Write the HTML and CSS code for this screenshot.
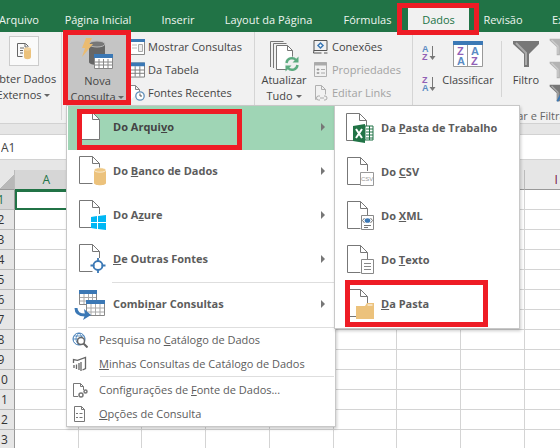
FILE: index.html
```html
<!DOCTYPE html>
<html lang="pt-BR">
<head>
<meta charset="utf-8">
<title>Nova Consulta</title>
<link rel="stylesheet" href="styles.css">
</head>
<body>
<svg class="defs" aria-hidden="true">
  <defs>
    <symbol id="page" viewBox="0 0 28 32"><path d="M1.500 1.500h13l7 7V15M14.500 1.500v7h7M1.500 1.500v27h13" fill="none" stroke="#777"/></symbol>
    <symbol id="table" viewBox="0 0 16 16"><path d="M.5.5h15v15H.5z" fill="#fff" stroke="#777"/><path d="M5.500 4v11M10.500 4v11M1 8h14M1 11.500h14" stroke="#777" fill="none"/><path d="M0 0h16v4H0z" fill="#3b78b5"/></symbol>
    <symbol id="funnel" viewBox="0 0 28 28"><path d="M1 1h26v3L17 14v13h-5V14L1 4z" fill="#777"/><path d="M4 3l10 10v12" fill="none" stroke="#aaa" stroke-width="2"/></symbol>
  </defs>
</svg>
<div class="app">
  <nav class="tabs">
    <a href="#">Arquivo</a><a href="#">Página Inicial</a><a href="#">Inserir</a><a href="#">Layout da Página</a><a href="#">Fórmulas</a><a href="#" class="active">Dados</a><a href="#">Revisão</a><a href="#">Exibição</a>
  </nav>
  <div class="ribbon">
    <div class="group external">
      <button class="big">
        <span class="frame"><svg width="18" height="18" viewBox="0 0 18 18"><path d="M2.500 1.500h8l3 3M2.500 1.500v13h5M10 2v3h3" fill="none" stroke="#666"/><path d="M5 6h4M5 8.500h3M5 11h3" stroke="#666"/><path d="M9 7v8c0 3 7 3 7 0V7" fill="#ecc27c"/><ellipse cx="12.500" cy="7" rx="3.500" ry="1.700" fill="#f1d29d"/></svg></span>
        <span>Obter Dados<br>Externos <i class="arrow"></i></span>
      </button>
    </div>
    <div class="group query">
      <button class="big pressed">
        <svg width="34" height="34" viewBox="0 0 34 34"><path d="M8 7v18c0 4 16 4 16 0V7z" fill="#666"/><ellipse cx="16" cy="7" rx="8" ry="3" fill="#777" stroke="#bbb"/><path d="M5 1h6L8 7h4L1 20l3-9H1z" fill="#eabb70"/><path d="M13.500 17.500h18v14h-18z" fill="#fff" stroke="#888"/><path d="M18 22v9M22.500 22v9M27 22v9M14 25h17M14 28h17" stroke="#888"/><path d="M13 17h19v4H13z" fill="#3b78b5"/></svg>
        <span>Nova<br>Consulta <i class="arrow"></i></span>
      </button>
    </div>
    <div class="group list">
      <button><svg width="15" height="16" viewBox="0 0 15 16"><path d="M.5.5h14v15H.5z" fill="#fff" stroke="#888"/><path d="M0 0h15v3H0z" fill="#3b78b5"/><path d="M8.500 5.500h4v7h-4z" fill="#eee" stroke="#aaa"/><path d="M2 6h5M2 9h5" stroke="#bbb"/></svg>Mostrar Consultas</button>
      <button><svg width="15" height="16"><use href="#table"/></svg>Da Tabela</button>
      <button><svg width="15" height="16" viewBox="0 0 15 16"><path d="M.5 14.500V.5h5l4 4V7M5.500.5v4h4" fill="#fff" stroke="#888"/><circle cx="10" cy="11" r="4.200" fill="#fff" stroke="#5f8fbb" stroke-width="1.300"/><path d="M10 8.500V11h2" fill="none" stroke="#555"/></svg>Fontes Recentes</button>
    </div>
    <div class="group refresh">
      <button class="big">
        <svg width="32" height="32" viewBox="0 0 32 32"><path d="M2.500 27V1.500h13M5.500 28V3.500h13" fill="none" stroke="#777"/><path d="M8.500 5.500h11l5 5v19h-16z" fill="#fff" stroke="#777"/><path d="M19.500 5.500v5h5" fill="none" stroke="#777"/><circle cx="24" cy="24" r="7.500" fill="#f1f1f1"/><path d="M18.500 23a5.500 5.500 0 0 1 9.500-3M29.500 25a5.500 5.500 0 0 1-9.500 3" fill="none" stroke="#5cab80" stroke-width="2.400"/><path d="M30.500 16.500v6h-6zM17.500 31.500v-6h6z" fill="#5cab80"/></svg>
        <span>Atualizar<br>Tudo <i class="arrow"></i></span>
      </button>
    </div>
    <div class="group list links">
      <button><svg width="15" height="15" viewBox="0 0 15 15"><path d="M1 .5h13v10H1zM1 10l-.5 3h8M11 13h3.500" fill="none" stroke="#555"/><path d="M7.500 3l2.500 2.500L7.500 8 5 5.500z" fill="#fff" stroke="#3b78b5" stroke-width="1.500"/></svg>Conexões</button>
      <button disabled><svg width="15" height="16" viewBox="0 0 15 16"><path d="M1.500.5h12v14h-12z" fill="none" stroke="#b0b0b0"/><path d="M1 2h13" stroke="#aaa" stroke-width="3"/><path d="M4 7h2v1H4zM4 10.500h2v1H4zM8 7.500h4M8 11h4" stroke="#aaa"/></svg>Propriedades</button>
      <button disabled><svg width="15" height="16" viewBox="0 0 15 16"><path d="M3.500 14.500h-1V.5h6l4 4v5M8.500.5v4h4" fill="none" stroke="#b0b0b0"/><path d="M7 11H5.500a2 2 0 0 0 0 4H7M11 11h1a2 2 0 0 1 0 4h-1M7 13h4" fill="none" stroke="#aaa"/></svg>Editar Links</button>
    </div>
    <div class="group sort">
      <div class="az">
        <button aria-label="Classificar de A a Z"><svg width="16" height="18" viewBox="0 0 16 18"><text x="1" y="8" class="letter blue">A</text><text x="1" y="16" class="letter purple">Z</text><path d="M11.500 2v12" stroke="#777"/><path d="M8.500 12h6l-3 4z" fill="#777"/></svg></button>
        <button aria-label="Classificar de Z a A"><svg width="16" height="18" viewBox="0 0 16 18"><text x="1" y="8" class="letter purple">Z</text><text x="1" y="16" class="letter blue">A</text><path d="M11.500 2v12" stroke="#777"/><path d="M8.500 12h6l-3 4z" fill="#777"/></svg></button>
      </div>
      <button class="big sorter">
        <svg width="30" height="26" viewBox="0 0 30 26"><path d="M.5.5h29v25H.5z" fill="#fff" stroke="#999"/><path d="M14.500 3v23" stroke="#999"/><path d="M0 0h30v4H0z" fill="#3b78b5"/><text x="4" y="14" class="letter l purple">Z</text><text x="4" y="24" class="letter l blue">A</text><text x="18" y="14" class="letter l blue">A</text><text x="18" y="24" class="letter l purple">Z</text></svg>
        <span>Classificar</span>
      </button>
      <span class="rule"></span>
      <button class="big filter"><svg width="28" height="28"><use href="#funnel"/></svg><span>Filtro</span></button>
      <div class="minis">
        <svg width="18" height="18" viewBox="0 0 28 28" opacity=".5"><use href="#funnel" width="28" height="28"/></svg>
        <svg width="18" height="18" viewBox="0 0 28 28" opacity=".5"><use href="#funnel" width="28" height="28"/></svg>
        <svg width="18" height="18" viewBox="0 0 28 28"><use href="#funnel" width="28" height="28"/><path d="M13 27l8-15 6 15" fill="none" stroke="#3b78b5" stroke-width="3"/></svg>
      </div>
      <span class="caption">Classificar e Filtrar</span>
    </div>
  </div>
  <div class="namebar"><input aria-label="Caixa de nome" value="A1"></div>
  <div class="sheet">
    <table>
      <thead><tr><th class="corner"></th><th>A</th><th>B</th><th>C</th><th>D</th><th>E</th><th>F</th><th>G</th><th>H</th><th class="last">I</th></tr></thead>
      <tbody>
        <tr><th class="cur">1</th><td class="selected"></td><td></td><td></td><td></td><td></td><td></td><td></td><td></td><td></td></tr>
        <tr><th>2</th><td></td><td></td><td></td><td></td><td></td><td></td><td></td><td></td><td></td></tr>
        <tr><th>3</th><td></td><td></td><td></td><td></td><td></td><td></td><td></td><td></td><td></td></tr>
        <tr><th>4</th><td></td><td></td><td></td><td></td><td></td><td></td><td></td><td></td><td></td></tr>
        <tr><th>5</th><td></td><td></td><td></td><td></td><td></td><td></td><td></td><td></td><td></td></tr>
        <tr><th>6</th><td></td><td></td><td></td><td></td><td></td><td></td><td></td><td></td><td></td></tr>
        <tr><th>7</th><td></td><td></td><td></td><td></td><td></td><td></td><td></td><td></td><td></td></tr>
        <tr><th>8</th><td></td><td></td><td></td><td></td><td></td><td></td><td></td><td></td><td></td></tr>
        <tr><th>9</th><td></td><td></td><td></td><td></td><td></td><td></td><td></td><td></td><td></td></tr>
        <tr><th>10</th><td></td><td></td><td></td><td></td><td></td><td></td><td></td><td></td><td></td></tr>
        <tr><th>11</th><td></td><td></td><td></td><td></td><td></td><td></td><td></td><td></td><td></td></tr>
        <tr><th>12</th><td></td><td></td><td></td><td></td><td></td><td></td><td></td><td></td><td></td></tr>
        <tr><th>13</th><td></td><td></td><td></td><td></td><td></td><td></td><td></td><td></td><td></td></tr>
      </tbody>
    </table>
  </div>

  <div class="menu main-menu">
    <button class="item open"><svg width="28" height="32" viewBox="0 0 28 32"><path d="M1.500 1.500h13l7 7v20h-20z" fill="#fff" stroke="#777"/><path d="M14.500 1.500v7h7" fill="none" stroke="#777"/></svg><span>Do Arqui<u>v</u>o</span></button>
    <button class="item"><svg width="28" height="32" viewBox="0 0 28 32"><use href="#page"/><path d="M16 15v13c0 3 12 3 12 0V15" fill="#ecc27c"/><ellipse cx="22" cy="15" rx="6" ry="2.200" fill="#efc986" stroke="#fff" stroke-width=".6"/></svg><span>Do <u>B</u>anco de Dados</span></button>
    <button class="item"><svg width="28" height="32" viewBox="0 0 28 32"><use href="#page"/><path d="M13 18l6-1v6h-6zM20 17l8-1v7h-8zM13 24h6v6l-6-1zM20 24h8v7l-8-1z" fill="#00b7f4"/></svg><span>Do A<u>z</u>ure</span></button>
    <button class="item"><svg width="28" height="32" viewBox="0 0 28 32"><use href="#page"/><circle cx="20" cy="22.500" r="4.500" fill="#fff" stroke="#3b78b5" stroke-width="1.800"/><path d="M20 15v4M20 26v4M12.500 22.500h4M23.500 22.500h4" stroke="#3b78b5" stroke-width="1.800"/></svg><span><u>D</u>e Outras Fontes</span></button>
    <hr class="inset">
    <button class="item combine"><svg width="32" height="32" viewBox="0 0 32 32"><path d="M5.500 2.500h17v14h-17z" fill="#fff" stroke="#888"/><path d="M10 6v10M14.500 6v10M18.500 6v10M6 9.500h16M6 13h16" stroke="#aaa"/><path d="M5 2h18v4H5z" fill="#3b78b5"/><path d="M12.500 12.500h18v15h-18z" fill="#fff" stroke="#888"/><path d="M17 16v11M21.500 16v11M26 16v11M13 20h17M13 24h17" stroke="#aaa"/><path d="M12 12h19v4H12z" fill="#3b78b5"/><path d="M2 20c0 5 3 7 9 7" fill="none" stroke="#3b78b5" stroke-width="3"/><path d="M10 21l7 6-8 5 2-5z" fill="#3b78b5"/></svg><span>Combi<u>n</u>ar Consultas</span></button>
    <hr>
    <button class="small"><svg width="16" height="16" viewBox="0 0 16 16"><circle cx="7" cy="7" r="6" fill="none" stroke="#3b78b5"/><path d="M1 7h12M7 1c-4 4-4 8 0 12M7 1c4 4 4 8 0 12M2 4h10" fill="none" stroke="#3b78b5" stroke-width=".8"/><circle cx="9" cy="9" r="3.500" fill="#fff" stroke="#666" stroke-width="1.500"/><path d="M11.500 11.500l4 4" stroke="#666" stroke-width="2"/></svg><span>Pesquisa no <u>C</u>atálogo de Dados</span></button>
    <button class="small"><svg width="16" height="16" viewBox="0 0 16 16"><path d="M1.500 7V3.500l4 .8 8-2.800v11l-3 1.500" fill="none" stroke="#666" stroke-width="1.300"/><path d="M2 9v3M4.500 8.500v4.500M7 7v7M9 6v9" stroke="#666" stroke-width="1.300"/></svg><span><u>M</u>inhas Consultas de Catálogo de Dados</span></button>
    <hr class="narrow">
    <button class="small"><svg width="16" height="16" viewBox="0 0 16 16"><path d="M6 14.500H1.500v-13h7l3 3V8M8.500 1.500v3h3" fill="none" stroke="#777"/><circle cx="9" cy="13" r="2" fill="none" stroke="#777" stroke-width="1.500"/><circle cx="13.500" cy="9.500" r="1.500" fill="none" stroke="#777" stroke-width="1.500"/></svg><span>Configurações de <u>F</u>onte de Dados...</span></button>
    <button class="small"><svg width="16" height="16" viewBox="0 0 16 16"><path d="M2.500.5h7l3 3v12h-10zM9.500.5v3h3" fill="#fff" stroke="#777"/><path d="M4 7.500h2M4 11.500h2M7.500 7.500h3M7.500 11.500h3" stroke="#777"/></svg><span><u>O</u>pções de Consulta</span></button>
  </div>

  <div class="menu sub-menu">
    <button class="item"><svg width="28" height="32" viewBox="0 0 28 32"><use href="#page" x="-1"/><path d="M19 14h8v14h-8z" fill="#fff" stroke="#217346"/><path d="M20 17h7M20 20h7M20 23h7M20 26h7M23.500 14v14" stroke="#217346"/><path d="M7 14l12-2v19L7 29z" fill="#217346"/><path d="M10 17l6 9M16 17l-6 9" stroke="#fff" stroke-width="2"/></svg><span>Da <u>P</u>asta de Trabalho</span></button>
    <button class="item"><svg width="28" height="32" viewBox="0 0 28 32"><use href="#page"/><path d="M14.500 16.500h13v13h-13z" fill="#fff" stroke="#999"/><text x="15" y="25" class="tiny">CSV</text></svg><span>Do <u>C</u>SV</span></button>
    <button class="item"><svg width="28" height="32" viewBox="0 0 28 32"><use href="#page"/><path d="M15.500 15.500h12v14h-12z" fill="#fff" stroke="#888"/><path d="M18.500 18l-2 2.500 2 2.500M24.500 18l2 2.500-2 2.500M18 25.500h7M18 27.500h4" fill="none" stroke="#777"/><ellipse cx="21.500" cy="20.500" rx="2.800" ry="2.300" fill="#3b78b5"/></svg><span>Do <u>X</u>ML</span></button>
    <button class="item"><svg width="28" height="32" viewBox="0 0 28 32"><use href="#page"/><path d="M15.500 15.500h12v14h-12z" fill="#fff" stroke="#888"/><path d="M18 19.500h7M18 22.500h7M18 25.500h7" stroke="#888"/></svg><span>Do <u>T</u>exto</span></button>
    <button class="item"><svg width="28" height="32" viewBox="0 0 28 32"><use href="#page"/><path d="M10 18h9l2-3h7v16H10z" fill="#ecc27c"/><path d="M21.500 17h5" stroke="#fff"/></svg><span><u>D</u>a Pasta</span></button>
  </div>

  <div class="mark mark-tab"></div>
  <div class="mark mark-query"></div>
  <div class="mark mark-file"></div>
  <div class="mark mark-folder"></div>
</div>
</body>
</html>
```
FILE: styles.css
```css
* { box-sizing: border-box; }
body {
  margin: 0;
  font: 11px/16px "Open Sans", "Noto Sans", sans-serif;
  color: #444;
}
button { font: inherit; color: inherit; border: 0; background: none; padding: 0; margin: 0; white-space: nowrap; }
svg { display: block; flex: none; }
.defs { position: absolute; width: 0; height: 0; }
.app { position: relative; min-height: 100vh; overflow: hidden; background: #fff; }

.tabs {
  display: grid;
  grid-template-columns: 62px 96px 64px 117px 81px 61px 68px 72px;
  padding: 8px 0 0;
  margin-left: -12px;
  background: #217346;
}
.tabs a { height: 24px; line-height: 24px; text-align: center; color: #eef5f0; text-decoration: none; white-space: nowrap; }
.tabs a.active { background: #f1f1f1; color: #217346; }

.ribbon { display: flex; height: 92px; background: #f1f1f1; border-bottom: 1px solid #d2d2d2; }
.group { flex: none; height: 88px; border-right: 1px solid #d5d5d5; }
.big { display: flex; flex-direction: column; align-items: center; width: 100%; }
.arrow { display: inline-block; border: 3px solid transparent; border-top-color: #666; border-bottom: 0; vertical-align: 2px; }

.external { width: 76px; margin-left: -14px; padding: 4px 0 0; }
.frame { display: grid; place-items: center; width: 30px; height: 30px; margin: 0 0 5px; border: 1px solid #ccc; background: #fafafa; }
.query { width: 68px; padding: 0 1px 0 4px; border: 0; }
.pressed { height: 72px; padding-top: 5px; background: #c5c5c5; }
.pressed svg { margin-bottom: 2px; }
.list { display: flex; flex-direction: column; gap: 7px; width: 125px; padding-top: 7px; }
.list button { display: flex; align-items: center; gap: 3px; height: 16px; }
.list button:disabled { color: #a3a3a3; }
.refresh { width: 58px; padding-top: 8px; border: 0; }
.links { width: 100px; }
.links button { gap: 4px; }
.sort {
  display: grid;
  grid-template-columns: 23px 56px 10px 40px 24px;
  grid-template-rows: 76px 16px;
  padding-left: 4px;
  border: 0;
}
.az { display: grid; gap: 13px; align-content: start; justify-items: center; padding-top: 12px; }
.sorter, .filter { padding-top: 9px; justify-content: flex-start; gap: 5px; }
.filter { padding-top: 8px; gap: 4px; }
.rule { width: 1px; height: 56px; margin: 9px 0 0 5px; background: #d5d5d5; }
.minis { display: grid; gap: 5px; align-content: start; padding: 6px 0 0 3px; }
.caption { grid-column: 2 / -1; justify-self: end; white-space: nowrap; color: #666; }
.letter { font: bold 9px "Liberation Sans", sans-serif; }
.letter.l { font-size: 11px; }
.blue { fill: #5b8cc4; }
.purple { fill: #9160b5; }
.tiny { font: 6px "Liberation Sans", sans-serif; fill: #999; }

.namebar { padding-top: 10px; background: #e6e6e6; }
.namebar input { display: block; width: 100%; height: 26px; padding: 0 1px; border: 1px solid #d2d2d2; border-width: 1px 0; background: #fff; color: #444; font: 12px "Open Sans", sans-serif; }

.sheet { margin-left: -12px; background: #e6e6e6; padding-top: 10px; }
table { width: 105%; table-layout: fixed; border-spacing: 0; background: #fff; }
th, td { height: 20px; padding: 0; border-right: 1px solid #d4d4d4; border-bottom: 1px solid #d4d4d4; }
th { background: #e6e6e6; font-weight: 400; font-size: 12px; line-height: 18px; color: #333; border-right-color: #999; border-bottom-color: #bbb; }
thead th { border-color: #bbb #bbb #999; color: #444; }
thead th:nth-child(2) { background: #d6d6d6; color: #217346; border-bottom: 1px solid #217346; }
thead th.last { color: #714; }
.corner { width: 27px; background: linear-gradient(135deg, #e6e6e6 68%, #b8b8b8 68%); }
.cur { background: #d6d6d6; color: #217346; }
.selected { border: 2px solid #217346; }

.menu { position: absolute; background: #fff; border: 1px solid #c8c8c8; box-shadow: 1px 2px 3px #0003; color: #5c5c5c; }
.menu button { display: flex; align-items: center; width: 100%; text-align: left; }
.item { height: 44px; gap: 7px; font-weight: 700; }
.menu .item { padding-bottom: 2px; }
.main-menu { left: 66px; top: 105px; width: 270px; padding: 0 1px; }
.main-menu .item { padding-left: 10px; }
.main-menu .item::after { content: ""; margin: 0 9px 0 auto; border: 4px solid transparent; border-left-color: #777; border-right: 0; }
.main-menu .open { background: #9fd5b5; color: #444; }
.main-menu .combine { padding-left: 6px; }
hr { height: 1px; margin: 0; border: 0; background: #dedede; }
hr.inset { margin-left: 44px; }
hr.narrow { margin: 0 0 1px 32px; }
.small { height: 24px; gap: 11px; padding-left: 4px; }
.sub-menu { left: 334px; top: 105px; width: 186px; padding: 1px 0; }
.sub-menu .item { padding-left: 11px; }

.mark { position: absolute; border: 5px solid #ee1c25; pointer-events: none; }
.mark-tab { left: 397px; top: 3px; width: 82px; height: 32px; }
.mark-query { left: 63px; top: 30px; width: 68px; height: 75px; }
.mark-file { left: 77px; top: 109px; width: 165px; height: 41px; }
.mark-folder { left: 345px; top: 280px; width: 143px; height: 47px; }
```
